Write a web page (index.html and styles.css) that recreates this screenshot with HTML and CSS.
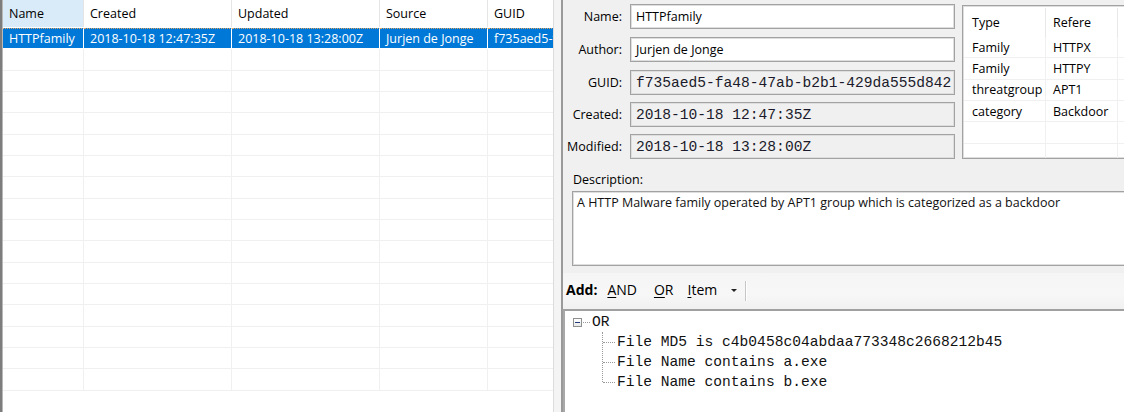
FILE: index.html
```html
<!DOCTYPE html>
<html>
<head>
<meta charset="utf-8">
<link rel="stylesheet" href="styles.css">
</head>
<body>
<div class="app">
  <div class="list">
    <div class="grid">
      <div class="row hdr">
        <div class="c c1 active">Name</div>
        <div class="c c2">Created</div>
        <div class="c c3">Updated</div>
        <div class="c c4">Source</div>
        <div class="c c5">GUID</div>
      </div>
      <div class="row sel">
        <div class="c c1">HTTPfamily</div>
        <div class="c c2">2018-10-18 12:47:35Z</div>
        <div class="c c3">2018-10-18 13:28:00Z</div>
        <div class="c c4">Jurjen de Jonge</div>
        <div class="c c5">f735aed5-fa48-47ab-b2b1-429da555d842</div>
      </div>
      <div class="row"><div class="c c1"></div><div class="c c2"></div><div class="c c3"></div><div class="c c4"></div><div class="c c5"></div></div>
      <div class="row"><div class="c c1"></div><div class="c c2"></div><div class="c c3"></div><div class="c c4"></div><div class="c c5"></div></div>
      <div class="row"><div class="c c1"></div><div class="c c2"></div><div class="c c3"></div><div class="c c4"></div><div class="c c5"></div></div>
      <div class="row"><div class="c c1"></div><div class="c c2"></div><div class="c c3"></div><div class="c c4"></div><div class="c c5"></div></div>
      <div class="row"><div class="c c1"></div><div class="c c2"></div><div class="c c3"></div><div class="c c4"></div><div class="c c5"></div></div>
      <div class="row"><div class="c c1"></div><div class="c c2"></div><div class="c c3"></div><div class="c c4"></div><div class="c c5"></div></div>
      <div class="row"><div class="c c1"></div><div class="c c2"></div><div class="c c3"></div><div class="c c4"></div><div class="c c5"></div></div>
      <div class="row"><div class="c c1"></div><div class="c c2"></div><div class="c c3"></div><div class="c c4"></div><div class="c c5"></div></div>
      <div class="row"><div class="c c1"></div><div class="c c2"></div><div class="c c3"></div><div class="c c4"></div><div class="c c5"></div></div>
      <div class="row"><div class="c c1"></div><div class="c c2"></div><div class="c c3"></div><div class="c c4"></div><div class="c c5"></div></div>
      <div class="row"><div class="c c1"></div><div class="c c2"></div><div class="c c3"></div><div class="c c4"></div><div class="c c5"></div></div>
      <div class="row"><div class="c c1"></div><div class="c c2"></div><div class="c c3"></div><div class="c c4"></div><div class="c c5"></div></div>
      <div class="row"><div class="c c1"></div><div class="c c2"></div><div class="c c3"></div><div class="c c4"></div><div class="c c5"></div></div>
      <div class="row"><div class="c c1"></div><div class="c c2"></div><div class="c c3"></div><div class="c c4"></div><div class="c c5"></div></div>
      <div class="row"><div class="c c1"></div><div class="c c2"></div><div class="c c3"></div><div class="c c4"></div><div class="c c5"></div></div>
      <div class="row"><div class="c c1"></div><div class="c c2"></div><div class="c c3"></div><div class="c c4"></div><div class="c c5"></div></div>
    </div>
  </div>
  <div class="split"></div>
  <div class="detail">
    <div class="top">
      <div class="fields">
        <div class="field"><span class="lbl">Name:</span><div class="box">HTTPfamily</div></div>
        <div class="field"><span class="lbl">Author:</span><div class="box">Jurjen de Jonge</div></div>
        <div class="field"><span class="lbl">GUID:</span><div class="box ro mono">f735aed5-fa48-47ab-b2b1-429da555d842</div></div>
        <div class="field"><span class="lbl">Created:</span><div class="box ro mono">2018-10-18 12:47:35Z</div></div>
        <div class="field"><span class="lbl">Modified:</span><div class="box ro mono">2018-10-18 13:28:00Z</div></div>
      </div>
      <div class="refs">
        <div class="rrow rhdr"><div class="rc r1">Type</div><div class="rc r2"><span class="clip">Reference</span></div><div class="rc r3"></div></div>
        <div class="rrow"><div class="rc r1">Family</div><div class="rc r2">HTTPX</div><div class="rc r3"></div></div>
        <div class="rrow"><div class="rc r1">Family</div><div class="rc r2">HTTPY</div><div class="rc r3"></div></div>
        <div class="rrow"><div class="rc r1">threatgroup</div><div class="rc r2">APT1</div><div class="rc r3"></div></div>
        <div class="rrow"><div class="rc r1">category</div><div class="rc r2">Backdoor</div><div class="rc r3"></div></div>
        <div class="rrow"><div class="rc r1"></div><div class="rc r2"></div><div class="rc r3"></div></div>
        <div class="rrow"><div class="rc r1"></div><div class="rc r2"></div><div class="rc r3"></div></div>
      </div>
    </div>
    <div class="desc-label">Description:</div>
    <div class="desc">A HTTP Malware family operated by APT1 group which is categorized as a backdoor</div>
    <div class="toolbar">
      <span class="add">Add:</span>
      <span class="tb and"><u>A</u>ND</span>
      <span class="tb or"><u>O</u>R</span>
      <span class="tb item"><u>I</u>tem</span>
      <span class="caret"></span>
      <span class="sep"></span>
    </div>
    <div class="tree">
      <div class="node root">
        <span class="expander"></span><span class="hline short"></span><span class="ntext">OR</span>
      </div>
      <div class="children">
        <div class="node child"><span class="hline"></span><span class="ntext">File MD5 is c4b0458c04abdaa773348c2668212b45</span></div>
        <div class="node child"><span class="hline"></span><span class="ntext">File Name contains a.exe</span></div>
        <div class="node child last"><span class="hline"></span><span class="ntext">File Name contains b.exe</span></div>
      </div>
    </div>
  </div>
</div>
</body>
</html>
```

FILE: styles.css
```css
html, body {
  margin: 0;
  padding: 0;
  width: 1124px;
  height: 412px;
  overflow: hidden;
  background: #f0f0f0;
}
body {
  font-family: "Open Sans", "Noto Sans", sans-serif;
  font-size: 12.5px;
  color: #111;
}
.app {
  display: flex;
  width: 1124px;
  height: 412px;
}

/* left list */
.list {
  width: 550px;
  height: 412px;
  border-left: 2px solid #7d7d7d;
  box-shadow: inset 1px 0 0 #b8b8b8;
  padding-left: 1px;
  background: #fff;
  overflow: hidden;
  flex: none;
  border-right: 1px solid #dcdcdc;
}
.grid {
  display: flex;
  flex-direction: column;
}
.row {
  display: flex;
  height: 21.333px;
  box-sizing: border-box;
  border-bottom: 1px solid #f0f0f0;
  flex: none;
}
.row.hdr {
  height: 28px;
  border-bottom: none;
  padding-bottom: 1px;
}
.c {
  box-sizing: border-box;
  border-right: 1px solid #f0f0f0;
  padding-left: 6px;
  white-space: nowrap;
  overflow: hidden;
  display: flex;
  align-items: center;
  flex: none;
}
.hdr .c {
  border-right: 1px solid #e5e5e5;
  color: #000;
}
.hdr .c.active {
  background: #d9ebf9;
}
.c1 { width: 81px; }
.c2 { width: 148px; }
.c3 { width: 148px; }
.c4 { width: 108px; }
.c5 { width: 200px; border-right: none; }
.row.sel {
  background: #0078d7;
  color: #fff;
  border-bottom: 1px solid #fff;
}
.row.sel .c {
  border-right: 1px solid #fff;
  border-top: 1px dotted #e0a464;
  padding-bottom: 1px;
}

.split {
  width: 7px;
  flex: none;
  background: #f4f4f4;
}

/* right detail */
.detail {
  flex: none;
  width: 561px;
  height: 412px;
  border-left: 2px solid #9a9a9a;
  background: #f0f0f0;
  display: flex;
  flex-direction: column;
  overflow: hidden;
}
.top {
  display: flex;
  padding-top: 4px;
  height: 161px;
  box-sizing: border-box;
  flex: none;
}
.fields {
  display: flex;
  flex-direction: column;
  flex: none;
}
.field {
  display: flex;
  align-items: center;
  height: 25px;
  gap: 8px;
  margin-top: 8px;
}
.field:first-child { margin-top: 0; }
.field:nth-child(4), .field:nth-child(5) { margin-top: 7px; }
.lbl {
  width: 59px;
  text-align: right;
  color: #000;
  white-space: nowrap;
  flex: none;
  line-height: 18px;
}
.box {
  width: 325px;
  height: 25px;
  box-sizing: border-box;
  background: #fff;
  border: 1px solid #a2a2a2;
  box-shadow: inset 0 0 0 1px #dedede;
  padding-left: 5px;
  display: flex;
  align-items: center;
  white-space: nowrap;
  overflow: hidden;
  color: #000;
  flex: none;
  line-height: 18px;
}
.box.ro {
  background: #f0f0f0;
}
.mono {
  font-family: "Liberation Mono", "Courier New", monospace;
  font-size: 14.6px;
  color: #1a1a2a;
}

.refs {
  margin-left: 7px;
  margin-top: 1px;
  width: 200px;
  height: 154px;
  box-sizing: border-box;
  border: 1px solid #a2a2a2;
  box-shadow: inset 0 0 0 1px #dedede;
  background: #fff;
  padding: 1px 0 0 1px;
  overflow: hidden;
  flex: none;
}
.rrow {
  display: flex;
  height: 21.333px;
  box-sizing: border-box;
  border-bottom: 1px solid #f0f0f0;
}
.rrow.rhdr {
  height: 30px;
  border-bottom: none;
  padding-top: 1px;
}
.rc {
  box-sizing: border-box;
  padding-left: 7px;
  border-right: 1px solid #f0f0f0;
  white-space: nowrap;
  overflow: hidden;
  display: flex;
  align-items: center;
  flex: none;
  color: #000;
}
.rhdr .rc { border-right: 1px solid #e8e8e8; }
.clip {
  display: block;
  width: 38px;
  overflow: hidden;
}
.r1 { width: 82px; padding-left: 8px; }
.r2 { width: 72px; }
.r3 { width: 40px; }

.desc-label {
  margin-top: 9px;
  margin-left: 10px;
  height: 19px;
  line-height: 19px;
  color: #000;
}
.desc {
  margin-top: 2px;
  margin-left: 9px;
  width: 600px;
  height: 75px;
  box-sizing: border-box;
  border: 1px solid #a2a2a2;
  box-shadow: inset 0 0 0 1px #dedede;
  background: #fff;
  padding: 2px 0 0 4px;
  white-space: nowrap;
  color: #111;
  flex: none;
}

.toolbar {
  margin-top: 7px;
  height: 36px;
  box-sizing: border-box;
  background: linear-gradient(#f5f5f5, #f7f7f7 60%, #f0f0f0);
  display: flex;
  align-items: center;
  padding: 0 0 3px 3px;
  flex: none;
  font-size: 14px;
}
.add {
  font-weight: 700;
  margin-right: 10px;
  color: #000;
}
.tb {
  color: #000;
}
.tb.and { margin-right: 17px; }
.tb.or { margin-right: 14px; }
.tb.item { margin-right: 14px; }
.tb u {
  text-decoration-thickness: 1px;
  text-underline-offset: 2px;
}
.caret {
  width: 0;
  height: 0;
  border-left: 3px solid transparent;
  border-right: 3px solid transparent;
  border-top: 3px solid #222;
  margin-top: 2px;
  margin-right: 8px;
}
.sep {
  width: 1px;
  height: 20px;
  background: #c6c6c6;
  box-shadow: 1px 0 0 #fff;
  margin-top: 2px;
}

.tree {
  flex: 1;
  background: #fff;
  border-top: 2px solid #a0a0a0;
  border-left: 2px solid #a8a8a8;
  padding: 1px 0 0 8px;
  font-family: "Liberation Mono", "Courier New", monospace;
  font-size: 14.6px;
  color: #111;
}
.node {
  display: flex;
  align-items: center;
  height: 20px;
  white-space: nowrap;
}
.expander {
  width: 9px;
  height: 9px;
  box-sizing: border-box;
  border: 1px solid #8e8f8f;
  background: linear-gradient(#fff, #e8e8e8);
  position: relative;
  flex: none;
}
.expander::after {
  content: "";
  position: absolute;
  left: 1px;
  top: 3px;
  width: 5px;
  height: 1px;
  background: #1f3b7a;
}
.hline {
  width: 12px;
  height: 0;
  border-top: 1px dotted #9a9a9a;
  margin-right: 2px;
  flex: none;
}
.hline.short {
  width: 7px;
  margin-left: 1px;
  margin-right: 2px;
}
.children {
  margin-left: 29px;
  border-left: 1px dotted #9a9a9a;
  height: 50px;
}
```
